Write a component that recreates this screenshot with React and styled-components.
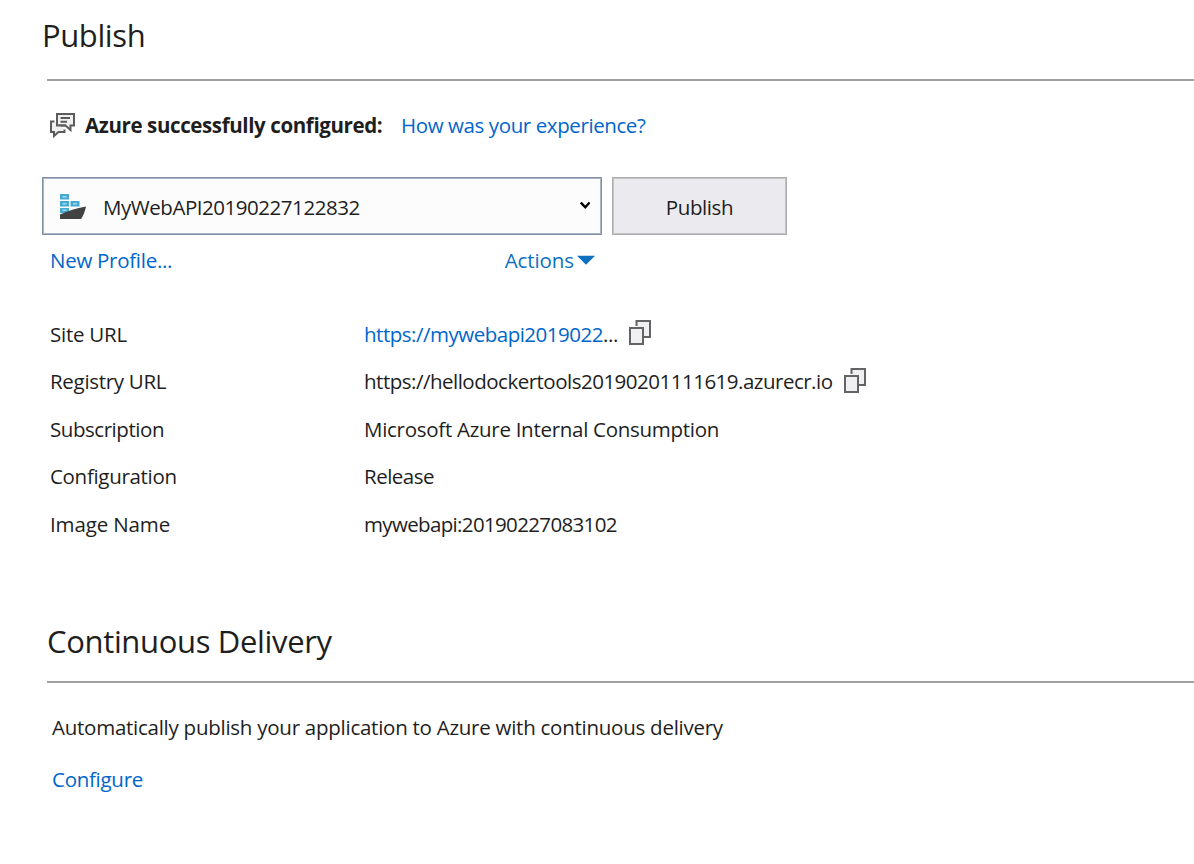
import React from "react";
import styled, { createGlobalStyle } from "styled-components";

const Global = createGlobalStyle`
  * { box-sizing: border-box; }
  body {
    margin: 0;
    background: #fff;
    color: #1e1e1e;
    font-family: "Open Sans", "Noto Sans", sans-serif;
    font-size: 20.5px;
    line-height: 28px;
  }
`;

const Page = styled.main`
  display: flex;
  flex-direction: column;
  height: 864px;
  padding-top: 14px;
  overflow: hidden;
  white-space: nowrap;
`;

const Heading = styled.h1`
  margin: 0;
  padding-left: ${(p) => p.$indent}px;
  font-size: 31px;
  font-weight: 400;
  line-height: 42px;
  letter-spacing: ${(p) => p.$track || 0}px;
`;

const Rule = styled.hr`
  width: calc(100% - 47px);
  height: 2px;
  margin: ${(p) => p.$gap}px 0 0 47px;
  border: 0;
  background: #a0a0a0;
`;

const Text = styled.span`
  color: ${(p) => p.$color || "inherit"};
  letter-spacing: ${(p) => p.$track || 0}px;
`;

const Link = styled.a`
  color: ${(p) => p.$color || "#0066cc"};
  text-decoration: none;
  cursor: pointer;
  letter-spacing: ${(p) => p.$track || 0}px;
`;

const Status = styled.div`
  display: flex;
  align-items: center;
  height: 28px;
  margin: 30px 0 0 49px;
`;

const StatusText = styled.strong`
  width: 316px;
  margin-left: 10px;
  font-weight: 700;
  letter-spacing: ${(p) => p.$track || 0}px;
`;

const ProfileBar = styled.div`
  display: flex;
  gap: 10px;
  margin: 38px 0 0 42px;
`;

const ProfileSelect = styled.div`
  display: flex;
  align-items: center;
  width: 560px;
  height: 58px;
  padding: 2px 11px 0 16px;
  border: 1px solid #8290a8;
  box-shadow: inset 0 0 0 1px #a9b3c4;
  background: #fcfcfd;
`;

const ProfileName = styled(Text)`
  flex: 1;
  margin-left: 16px;
`;

const Button = styled.button`
  width: 175px;
  height: 58px;
  padding: 2px 0 0;
  border: 1px solid #acacae;
  box-shadow: inset 0 0 0 1px #c4c4c6;
  background: #ebeaef;
  color: inherit;
  font: inherit;
  letter-spacing: ${(p) => p.$track || 0}px;
`;

const ProfileLinks = styled.div`
  display: flex;
  justify-content: space-between;
  width: 545px;
  height: 28px;
  margin: 11px 0 0 50px;
`;

const Actions = styled.div`
  display: flex;
  align-items: center;
  gap: 3px;
`;

const Details = styled.dl`
  display: grid;
  grid-template-columns: 314px 1fr;
  grid-auto-rows: 47.5px;
  align-items: center;
  margin: 36px 0 0 50px;
`;

const Label = styled.dt`
  letter-spacing: ${(p) => p.$track || 0}px;
`;

const Value = styled.dd`
  display: flex;
  align-items: center;
  margin: 0;
`;

const CopyButton = styled.span`
  display: flex;
  margin: 0 0 3px 10px;
`;

const Section = styled.section`
  margin-top: 72px;
`;

const Line = styled.p`
  height: 28px;
  margin: ${(p) => p.$gap}px 0 0 52px;
`;

const FeedbackIcon = () => (
  <svg width="26" height="26" viewBox="0 0 26 26" fill="none" stroke="#5c5c5c" strokeWidth="2">
    <path d="M8 2H25V13.500H21.500V18L16.500 13.500H8Z" fill="#f0f0f2" />
    <path d="M11.500 6H21M11.500 9.700H18" />
    <path d="M5.500 9.500H2V20H5V24L9.500 20H15.500V17.500" fill="#f0f0f2" />
    <path d="M8 2V13.500H16.500" />
  </svg>
);

const ContainerIcon = () => (
  <svg width="28" height="28" viewBox="0 0 28 28">
    <path fill="#46a9d2" d="M1 1h9v5.500H1zM1 8h9v5.500H1zM11.500 8h9v5.500h-9zM1 15h9v5H1z" />
    <path stroke="#9fd9f0" strokeWidth="1.500" d="M3.500 3.800h4M3.500 10.800h4M14 10.800h4M3.500 17.300h4" />
    <path fill="#424242" d="M1 21.500C9 18 17 15 27 13.500C26 18.500 24.500 22.500 22 26H1Z" />
  </svg>
);

const CopyIcon = () => (
  <svg width="24" height="26" viewBox="0 0 24 26" fill="#efeff1" stroke="#636363" strokeWidth="2">
    <path d="M8.500 7V2H22V18H16" />
    <path d="M2 9H15V25H2Z" />
  </svg>
);

const Chevron = styled(({ className }) => (
  <svg className={className} width="10" height="9" viewBox="0 0 10 9" fill="none" stroke="#000" strokeWidth="2.400">
    <path d="M.8 1.500L5.300 6.300L9.600 1.500" />
  </svg>
))`
  margin-bottom: 3px;
`;

const Triangle = () => (
  <svg width="18" height="10" viewBox="0 0 18 10">
    <path fill="#0e70c0" d="M0 .8H18L9 9.800Z" />
  </svg>
);

export default function App() {
  return (
    <>
      <Global />
      <Page>
        <Heading $indent={42} $track={-0.4}>Publish</Heading>
        <Rule $gap={23} />
        <Status>
          <FeedbackIcon />
          <StatusText $track={-0.38}>Azure successfully configured:</StatusText>
          <Link $track={-0.4}>How was your experience?</Link>
        </Status>
        <ProfileBar>
          <ProfileSelect>
            <ContainerIcon />
            <ProfileName $track={-0.46}>MyWebAPI20190227122832</ProfileName>
            <Chevron />
          </ProfileSelect>
          <Button $track={-0.4}>Publish</Button>
        </ProfileBar>
        <ProfileLinks>
          <Link $track={-0.28}>New Profile...</Link>
          <Actions>
            <Link $color="#0e70c0" $track={-0.1}>Actions</Link>
            <Triangle />
          </Actions>
        </ProfileLinks>
        <Details>
          <Label $track={-0.25}>Site URL</Label>
          <Value>
            <Link $track={-0.49}>https://mywebapi2019022</Link>
            <Text $track={-0.4}>...</Text>
            <CopyButton><CopyIcon /></CopyButton>
          </Value>
          <Label $track={-0.3}>Registry URL</Label>
          <Value>
            <Text $track={-0.5}>https://hellodockertools20190201111619.azurecr.io</Text>
            <CopyButton><CopyIcon /></CopyButton>
          </Value>
          <Label $track={-0.45}>Subscription</Label>
          <Value><Text $track={-0.28}>Microsoft Azure Internal Consumption</Text></Value>
          <Label $track={-0.31}>Configuration</Label>
          <Value><Text $track={-0.5}>Release</Text></Value>
          <Label $track={-0.13}>Image Name</Label>
          <Value><Text $track={-0.65}>mywebapi:20190227083102</Text></Value>
        </Details>
        <Section>
          <Heading as="h2" $indent={47} $track={-0.34}>Continuous Delivery</Heading>
          <Rule $gap={19} />
          <Line $gap={30}>
            <Text $track={-0.255}>Automatically publish your application to Azure with continuous delivery</Text>
          </Line>
          <Line $gap={24}><Link $track={-0.28}>Configure</Link></Line>
        </Section>
      </Page>
    </>
  );
}
